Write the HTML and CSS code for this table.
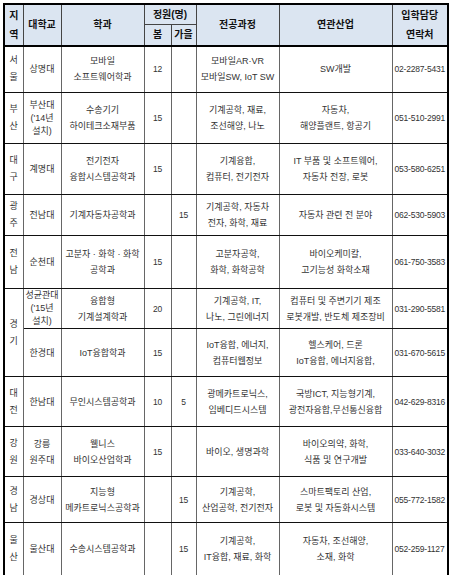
FILE: index.html
```html
<!DOCTYPE html>
<html lang="ko">
<head>
<meta charset="utf-8">
<link rel="stylesheet" href="styles.css">
</head>
<body>
<table class="grid">
  <colgroup>
    <col class="c-region"><col class="c-univ"><col class="c-dept"><col class="c-spring"><col class="c-fall"><col class="c-major"><col class="c-industry"><col class="c-contact">
  </colgroup>
  <thead>
    <tr class="h1">
      <th rowspan="2">지<br>역</th>
      <th rowspan="2">대학교</th>
      <th rowspan="2">학과</th>
      <th colspan="2">정원(명)</th>
      <th rowspan="2">전공과정</th>
      <th rowspan="2">연관산업</th>
      <th rowspan="2">입학담당<br>연락처</th>
    </tr>
    <tr class="h2">
      <th>봄</th>
      <th>가을</th>
    </tr>
  </thead>
  <tbody>
    <tr class="r1">
      <td class="region">서<br>울</td><td>상명대</td><td>모바일<br>소프트웨어학과</td><td class="num">12</td><td class="num"></td><td>모바일AR·VR<br>모바일SW, IoT SW</td><td>SW개발</td><td class="tel">02-2287-5431</td>
    </tr>
    <tr class="r2">
      <td class="region">부<br>산</td><td class="tight">부산대<br>('14년<br>설치)</td><td>수송기기<br>하이테크소재부품</td><td class="num">15</td><td class="num"></td><td>기계공학, 재료,<br>조선해양, 나노</td><td>자동차,<br>해양플랜트, 항공기</td><td class="tel">051-510-2991</td>
    </tr>
    <tr class="r3">
      <td class="region">대<br>구</td><td>계명대</td><td>전기전자<br>융합시스템공학과</td><td class="num">15</td><td class="num"></td><td>기계융합,<br>컴퓨터, 전기전자</td><td>IT 부품 및 소프트웨어,<br>자동차 전장, 로봇</td><td class="tel">053-580-6251</td>
    </tr>
    <tr class="r4">
      <td class="region">광<br>주</td><td>전남대</td><td>기계자동차공학과</td><td class="num"></td><td class="num">15</td><td>기계공학, 자동차<br>전자, 화학, 재료</td><td>자동차 관련 전 분야</td><td class="tel">062-530-5903</td>
    </tr>
    <tr class="r5">
      <td class="region">전<br>남</td><td>순천대</td><td>고분자 · 화학 · 화학<br>공학과</td><td class="num">15</td><td class="num"></td><td>고분자공학,<br>화학, 화학공학</td><td>바이오케미칼,<br>고기능성 화학소재</td><td class="tel">061-750-3583</td>
    </tr>
    <tr class="r6">
      <td class="region" rowspan="2">경<br>기</td><td class="tight">성균관대<br>('15년<br>설치)</td><td>융합형<br>기계설계학과</td><td class="num">20</td><td class="num"></td><td>기계공학, IT,<br>나노, 그린에너지</td><td>컴퓨터 및 주변기기 제조<br>로봇개발, 반도체 제조장비</td><td class="tel">031-290-5581</td>
    </tr>
    <tr class="r7">
      <td>한경대</td><td>IoT융합학과</td><td class="num">15</td><td class="num"></td><td>IoT융합, 에너지,<br>컴퓨터웹정보</td><td>헬스케어, 드론<br>IoT융합, 에너지융합,</td><td class="tel">031-670-5615</td>
    </tr>
    <tr class="r8">
      <td class="region">대<br>전</td><td>한남대</td><td>무인시스템공학과</td><td class="num">10</td><td class="num">5</td><td>광메카트로닉스,<br>임베디드시스템</td><td>국방ICT, 지능형기계,<br>광전자융합,무선통신융합</td><td class="tel">042-629-8316</td>
    </tr>
    <tr class="r9">
      <td class="region">강<br>원</td><td>강릉<br>원주대</td><td>웰니스<br>바이오산업학과</td><td class="num">15</td><td class="num"></td><td>바이오, 생명과학</td><td>바이오의약, 화학,<br>식품 및 연구개발</td><td class="tel">033-640-3032</td>
    </tr>
    <tr class="r10">
      <td class="region">경<br>남</td><td>경상대</td><td>지능형<br>메카트로닉스공학과</td><td class="num"></td><td class="num">15</td><td>기계공학,<br>산업공학, 전기전자</td><td>스마트팩토리 산업,<br>로봇 및 자동화시스템</td><td class="tel">055-772-1582</td>
    </tr>
    <tr class="r11">
      <td class="region">울<br>산</td><td>울산대</td><td>수송시스템공학과</td><td class="num"></td><td class="num">15</td><td>기계공학,<br>IT융합, 재료, 화학</td><td>자동차, 조선해양,<br>소재, 화학</td><td class="tel">052-259-1127</td>
    </tr>
  </tbody>
</table>
</body>
</html>
```
FILE: styles.css
```css
html, body {
  margin: 0;
  padding: 0;
  background: #ffffff;
}
body {
  padding: 3px 0 0 3px;
  font-family: "Liberation Sans", "Noto Sans CJK KR", sans-serif;
}
.grid {
  border-collapse: collapse;
  table-layout: fixed;
  width: 444px;
  border: 2px solid #000;
  color: #333;
}
.c-region { width: 19px; }
.c-univ { width: 38px; }
.c-dept { width: 83px; }
.c-spring { width: 27px; }
.c-fall { width: 25px; }
.c-major { width: 83px; }
.c-industry { width: 113px; }
.c-contact { width: 56px; }

.grid th {
  background: #dbe5f1;
  color: #111;
  font-weight: bold;
  font-size: 10px;
  line-height: 19px;
  padding: 0;
  border: 1px solid #444;
  text-align: center;
  vertical-align: middle;
}
.grid thead tr.h2 th { border-bottom: 2px solid #000; }
.grid thead th[rowspan] { border-bottom: 2px solid #000; }
tr.h1 { height: 19px; }
tr.h2 { height: 21px; }

.grid td {
  font-size: 9px;
  line-height: 16px;
  padding: 0;
  text-align: center;
  vertical-align: middle;
  border-left: 1px solid #666;
  border-right: 1px solid #666;
  border-top: 1px solid #111;
  border-bottom: 1px solid #111;
  white-space: nowrap;
  overflow: hidden;
  color: #333;
}
.grid td.region { font-size: 9px; line-height: 17px; color: #333; }
.grid td.tight { line-height: 13px; }
.grid td.num, .grid td.tel {
  font-size: 8.5px;
  letter-spacing: -0.2px;
}
.grid td.tel { text-align: left; padding-left: 2px; }

tr.r1 { height: 47px; }
tr.r2 { height: 51px; }
tr.r3 { height: 51px; }
tr.r4 { height: 41px; }
tr.r5 { height: 53px; }
tr.r6 { height: 39px; }
tr.r7 { height: 48px; }
tr.r8 { height: 50px; }
tr.r9 { height: 50px; }
tr.r10 { height: 46px; }
tr.r11 { height: 53px; }
```
